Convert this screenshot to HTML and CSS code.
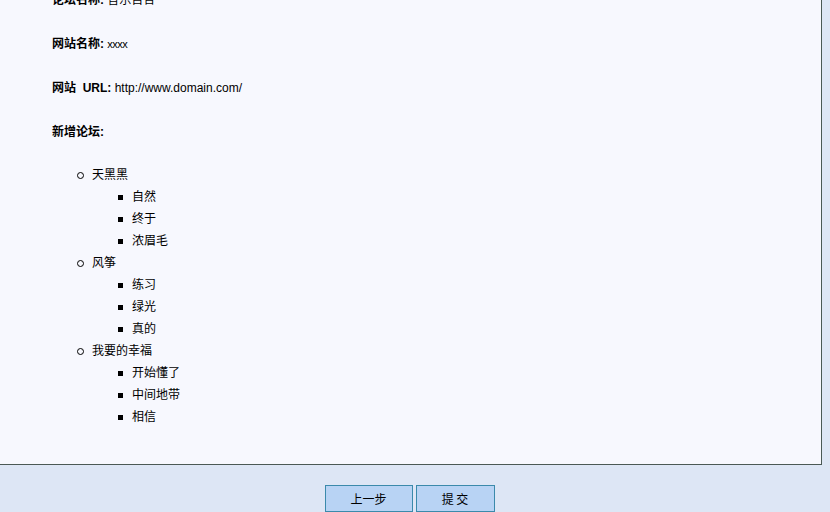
FILE: index.html
```html
<!DOCTYPE html>
<html lang="zh">
<head>
<meta charset="utf-8">
<title>新增论坛</title>
<link rel="stylesheet" href="styles.css">
</head>
<body>
<div class="panel">
  <div class="content">
    <div class="row"><b>论坛名称:</b> 音乐百合</div>
    <div class="row"><b>网站名称:</b> <span class="small">xxxx</span></div>
    <div class="row"><b>网站&nbsp;&nbsp;URL:</b> http://www.domain.com/</div>
    <div class="row row-last"><b>新增论坛:</b></div>
    <ul class="forums">
      <li>
        <div class="name">天黑黑</div>
        <ul class="sub">
          <li>自然</li>
          <li>终于</li>
          <li>浓眉毛</li>
        </ul>
      </li>
      <li>
        <div class="name">风筝</div>
        <ul class="sub">
          <li>练习</li>
          <li>绿光</li>
          <li>真的</li>
        </ul>
      </li>
      <li>
        <div class="name">我要的幸福</div>
        <ul class="sub">
          <li>开始懂了</li>
          <li>中间地带</li>
          <li>相信</li>
        </ul>
      </li>
    </ul>
  </div>
</div>
<div class="footer">
  <button class="btn btn-prev">上一步</button>
  <button class="btn btn-submit">提&nbsp;交</button>
</div>
</body>
</html>
```
FILE: styles.css
```css
html, body {
  margin: 0;
  padding: 0;
}
body {
  background: #dde6f5;
  font-family: "Liberation Sans", "Noto Sans CJK SC", sans-serif;
  font-size: 12px;
  color: #000;
  width: 830px;
  height: 512px;
  overflow: hidden;
}
.panel {
  width: 821px;
  height: 464px;
  background: #f7f8fe;
  border-right: 1px solid #4b5955;
  border-bottom: 1px solid #4b5955;
  overflow: hidden;
}
.content {
  margin-top: -8px;
  padding-left: 52px;
}
.row {
  line-height: 16px;
  height: 16px;
  margin-bottom: 28px;
  white-space: nowrap;
}
.row-last {
  margin-bottom: 24px;
}
.row b {
  font-weight: bold;
}
.small {
  font-size: 11px;
  letter-spacing: -0.5px;
}
.forums {
  list-style: none;
  margin: 0;
  padding: 0 0 0 25px;
}
.forums li {
  list-style: none;
}
.name {
  display: flex;
  align-items: center;
  height: 22px;
  line-height: 22px;
}
.name::before {
  content: "";
  width: 5px;
  height: 5px;
  border: 1px solid #000;
  border-radius: 50%;
  margin-right: 8px;
}
.sub {
  margin: 0;
  padding: 0 0 0 41px;
}
.sub li {
  display: flex;
  align-items: center;
  height: 22px;
  line-height: 22px;
}
.sub li::before {
  content: "";
  width: 5px;
  height: 5px;
  background: #000;
  margin-right: 9px;
}
.footer {
  display: flex;
  justify-content: center;
  gap: 3px;
  padding: 20px 11px 0 0;
}
.btn {
  font-family: "Noto Sans CJK SC", sans-serif;
  font-size: 12px;
  background: #b8d3f4;
  border: 1px solid #3b8aab;
  height: 27px;
  padding: 0;
  color: #000;
  margin: 0;
}
.btn-prev {
  width: 88px;
}
.btn-submit {
  width: 79px;
}
```
